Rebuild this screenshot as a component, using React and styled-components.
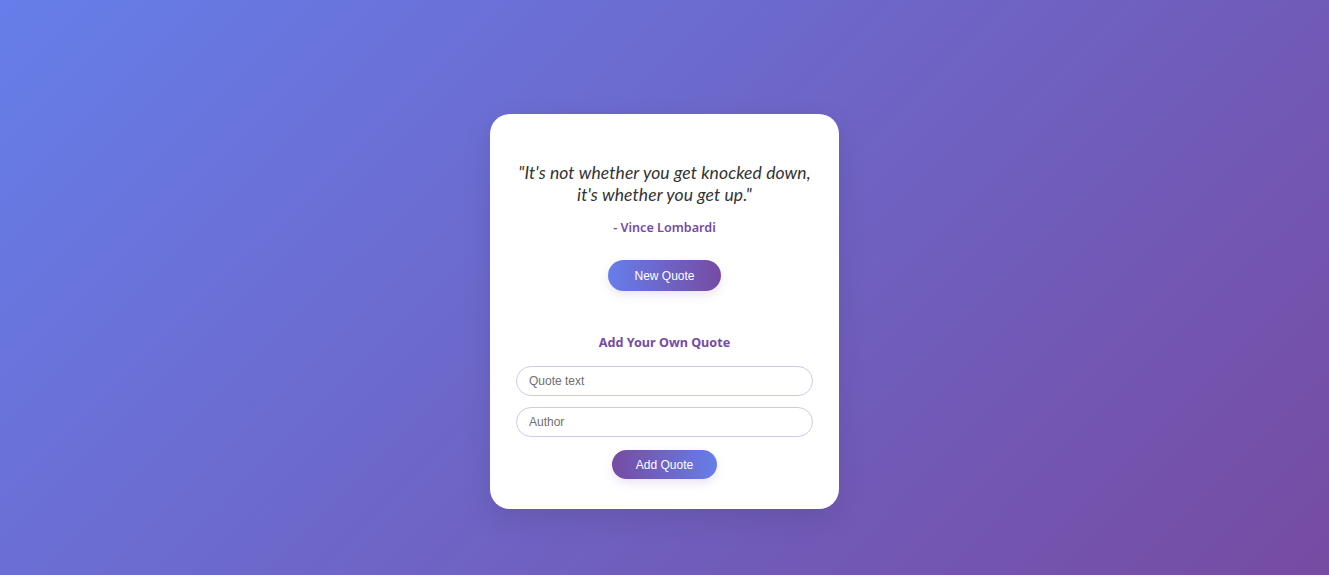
import { useState } from "react";
import styled, { createGlobalStyle } from "styled-components";

const GlobalStyle = createGlobalStyle`
  html, body {
    margin: 0;
    padding: 0;
    height: 100%;
  }
  body {
    font-family: "Noto Sans", "Open Sans", sans-serif;
    background: linear-gradient(135deg, #667eea 0%, #764ba2 100%);
    min-height: 575px;
  }
  #root {
    min-height: 575px;
  }
`;

const Page = styled.div`
  min-height: 575px;
  box-sizing: border-box;
  padding-top: 48px;
  display: flex;
  align-items: center;
  justify-content: center;
`;

const Card = styled.div`
  width: 349px;
  box-sizing: border-box;
  padding: 48px 26px 30px;
  background: #fff;
  border-radius: 20px;
  box-shadow: 0 10px 30px rgba(0, 0, 0, 0.1);
  display: flex;
  flex-direction: column;
  align-items: center;
  text-align: center;
`;

const QuoteText = styled.p`
  margin: 0 -6px;
  font-family: Lato, "Noto Sans", sans-serif;
  font-size: 17.5px;
  line-height: 22px;
  font-style: italic;
  letter-spacing: 0.1px;
  color: #333;
`;

const Author = styled.p`
  margin: 12px 0 0;
  font-size: 12.6px;
  line-height: 20px;
  font-weight: 600;
  color: #764ba2;
`;

const PillButton = styled.button`
  margin-top: ${(p) => p.$top}px;
  height: ${(p) => p.$height}px;
  padding: 0 ${(p) => p.$pad}px;
  border: none;
  border-radius: 20px;
  font-family: "Liberation Sans", Arial, sans-serif;
  font-size: 12px;
  color: #fff;
  cursor: pointer;
  background: linear-gradient(
    90deg,
    ${(p) => (p.$reverse ? "#764ba2" : "#667eea")},
    ${(p) => (p.$reverse ? "#667eea" : "#764ba2")}
  );
  box-shadow: 0 4px 10px rgba(118, 75, 162, 0.15);
`;

const Heading = styled.h3`
  margin: 42px 0 0;
  font-size: 12.6px;
  line-height: 20px;
  font-weight: 700;
  color: #764ba2;
`;

const Form = styled.form`
  width: 100%;
  margin-top: 13px;
  display: flex;
  flex-direction: column;
  align-items: center;
  gap: 11px;
`;

const Field = styled.input`
  width: 100%;
  box-sizing: border-box;
  height: 30px;
  padding: 0 12px;
  border: 1px solid #d3c6ec;
  border-radius: 16px;
  font-family: "Liberation Sans", Arial, sans-serif;
  font-size: 12px;
  color: #333;
  outline: none;
  &::placeholder {
    color: #6f6f6f;
  }
`;

const quotes = [
  { text: "It's not whether you get knocked down, it's whether you get up.", author: "Vince Lombardi" },
  { text: "The only way to do great work is to love what you do.", author: "Steve Jobs" },
];

const App = () => {
  const [list, listSet] = useState(quotes);
  const [index, indexSet] = useState(0);
  const [text, textSet] = useState("");
  const [author, authorSet] = useState("");

  const handleNew = () => {
    indexSet((index + 1) % list.length);
  };

  const handleAdd = (event) => {
    event.preventDefault();
    if (!text.trim()) return;
    listSet([...list, { text, author: author || "Unknown" }]);
    textSet("");
    authorSet("");
  };

  const quote = list[index];

  return (
    <Page>
      <GlobalStyle />
      <Card>
        <QuoteText>{`"${quote.text}"`}</QuoteText>
        <Author>{`- ${quote.author}`}</Author>
        <PillButton $top={22} $height={31} $pad={26} onClick={handleNew}>
          New Quote
        </PillButton>
        <Heading>Add Your Own Quote</Heading>
        <Form onSubmit={handleAdd}>
          <Field placeholder="Quote text" value={text} onChange={(e) => textSet(e.target.value)} />
          <Field placeholder="Author" value={author} onChange={(e) => authorSet(e.target.value)} />
          <PillButton $top={2} $height={29} $pad={24} $reverse type="submit">
            Add Quote
          </PillButton>
        </Form>
      </Card>
    </Page>
  );
};

export default App;
